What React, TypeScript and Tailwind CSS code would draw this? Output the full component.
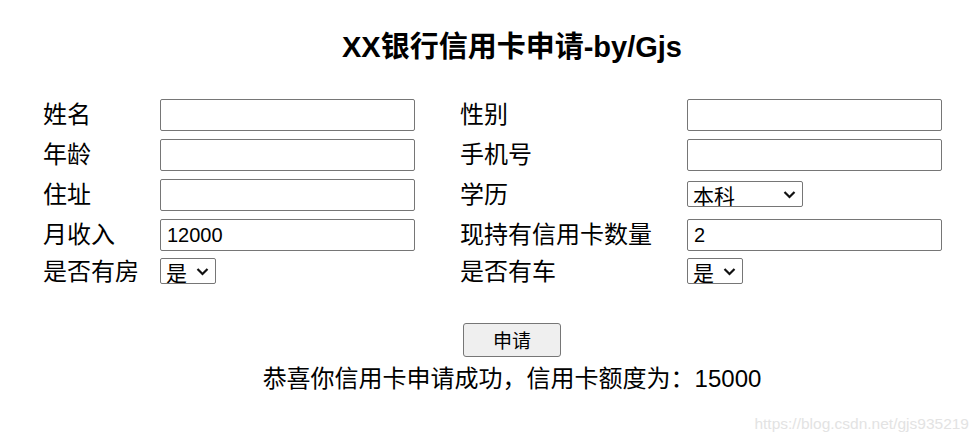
import React from 'react';

const font = { fontFamily: '"Liberation Sans", "Noto Sans CJK SC", sans-serif' };

function Chevron() {
  return (
    <svg width="13" height="9" viewBox="0 0 13 9" className="shrink-0">
      <path d="M1.5 2 L6.5 7 L11.5 2" fill="none" stroke="#111" strokeWidth="2.2" />
    </svg>
  );
}

function TextBox({ value = '' }: { value?: string }) {
  return (
    <input
      readOnly
      value={value}
      className="w-[255px] h-[32px] border border-[#767676] rounded-[2px] bg-white pl-[6px] text-[20px] text-black outline-none"
      style={font}
    />
  );
}

function Select({ value, width }: { value: string; width: string }) {
  return (
    <div
      className={`${width} h-[26px] border border-[#767676] rounded-[2px] bg-white flex items-center justify-between pl-[5px] pr-[6px] overflow-hidden`}
    >
      <span className="text-[21px] leading-[26px] text-black translate-y-[3px]">{value}</span>
      <Chevron />
    </div>
  );
}

function Label({ children }: { children: React.ReactNode }) {
  return <span className="text-[24px] leading-none text-black whitespace-nowrap">{children}</span>;
}

export default function App() {
  return (
    <div className="relative w-full h-[443px] bg-white overflow-hidden" style={font}>
      {/* Title */}
      <div className="pl-[45px] pt-[30px] text-center">
        <h1 className="text-[29px] leading-[35px] font-bold text-black">XX银行信用卡申请-by/Gjs</h1>
      </div>

      {/* Form grid */}
      <div className="mt-[30px] ml-[43px] grid grid-cols-[117px_300px_227px_255px] grid-rows-[40px_40px_40px_40px_34px] items-center">
        <Label>姓名</Label>
        <TextBox />
        <Label>性别</Label>
        <TextBox />

        <Label>年龄</Label>
        <TextBox />
        <Label>手机号</Label>
        <TextBox />

        <Label>住址</Label>
        <TextBox />
        <Label>学历</Label>
        <div className="-mt-[2px]">
          <Select value="本科" width="w-[116px]" />
        </div>

        <Label>月收入</Label>
        <TextBox value="12000" />
        <Label>现持有信用卡数量</Label>
        <TextBox value="2" />

        <Label>是否有房</Label>
        <div className="-mt-[2px]">
          <Select value="是" width="w-[56px]" />
        </div>
        <Label>是否有车</Label>
        <div className="-mt-[2px]">
          <Select value="是" width="w-[56px]" />
        </div>
      </div>

      {/* Submit + result */}
      <div className="pl-[45px] mt-[34px] flex flex-col items-center">
        <button className="w-[98px] h-[34px] bg-[#efefef] border border-[#767676] rounded-[3px] pt-[3px] text-[19px] leading-none text-black">
          申请
        </button>
        <p className="mt-[7px] text-[24px] leading-[29px] text-black">恭喜你信用卡申请成功，信用卡额度为：15000</p>
      </div>

      {/* Watermark */}
      <span className="absolute right-[10px] bottom-[10px] text-[15.5px] leading-[18px] text-[#e3e3e3]">
        https://blog.csdn.net/gjs935219
      </span>
    </div>
  );
}
